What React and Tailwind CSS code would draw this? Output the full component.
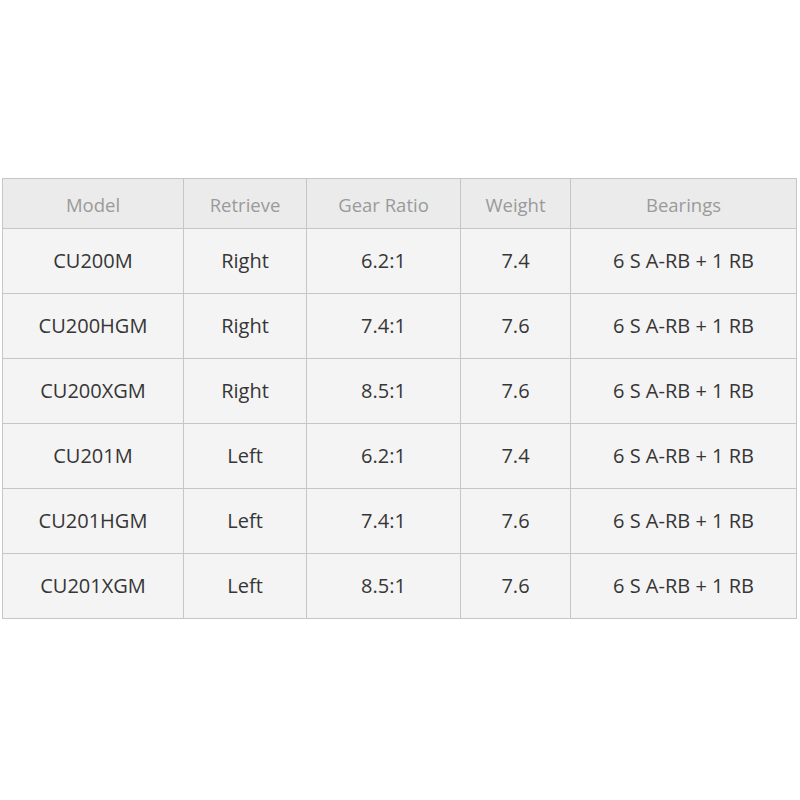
import React from "react";

const headers = ["Model", "Retrieve", "Gear Ratio", "Weight", "Bearings"];
const rows = [
  ["CU200M", "Right", "6.2:1", "7.4", "6 S A-RB + 1 RB"],
  ["CU200HGM", "Right", "7.4:1", "7.6", "6 S A-RB + 1 RB"],
  ["CU200XGM", "Right", "8.5:1", "7.6", "6 S A-RB + 1 RB"],
  ["CU201M", "Left", "6.2:1", "7.4", "6 S A-RB + 1 RB"],
  ["CU201HGM", "Left", "7.4:1", "7.6", "6 S A-RB + 1 RB"],
  ["CU201XGM", "Left", "8.5:1", "7.6", "6 S A-RB + 1 RB"],
];

export default function App() {
  return (
    <div
      className="w-[800px] h-[800px] bg-white pt-[178px] pl-[2px]"
      style={{ fontFamily: '"Open Sans", "Liberation Sans", sans-serif' }}
    >
      <div className="grid grid-cols-[181px_123px_154px_110px_226px] w-fit border-l border-t border-[#c6c6c6]">
        {headers.map((h) => (
          <div
            key={h}
            className="h-[50px] flex items-center justify-center pt-[3px] bg-[#ebebeb] border-r border-b border-[#c6c6c6] text-[18.5px] text-[#9a9a9a]"
          >
            {h}
          </div>
        ))}
        {rows.map((r, i) =>
          r.map((c, j) => (
            <div
              key={i + "-" + j}
              className="h-[65px] flex items-center justify-center bg-[#f4f4f4] border-r border-b border-[#c6c6c6] text-[20px] text-[#363636]"
            >
              {c}
            </div>
          ))
        )}
      </div>
    </div>
  );
}
